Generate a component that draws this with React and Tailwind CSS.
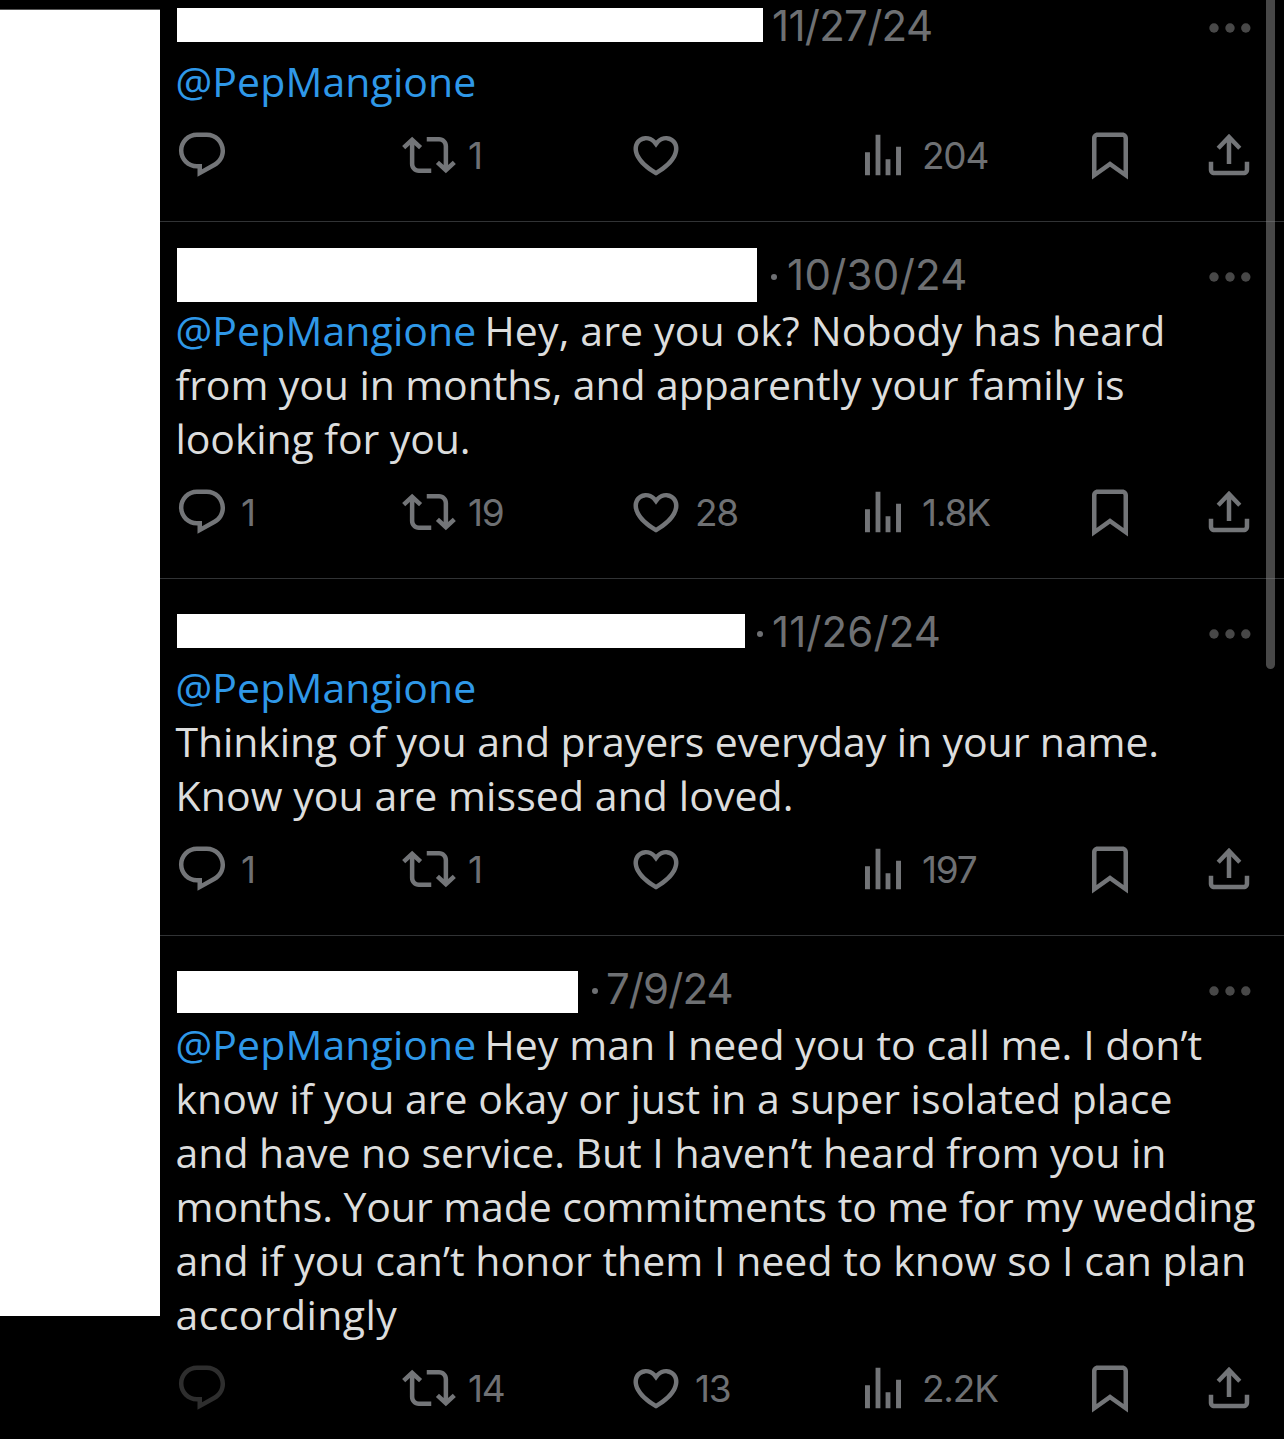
const PATHS = {
  reply:
    "M1.751 10c0-4.42 3.584-8 8.005-8h4.366c4.49 0 8.129 3.64 8.129 8.13 0 2.96-1.607 5.68-4.196 7.11l-8.054 4.46v-3.69h-.067c-4.49.1-8.183-3.51-8.183-8.01zm8.005-6c-3.317 0-6.005 2.69-6.005 6 0 3.37 2.77 6.08 6.138 6.01l.351-.01h1.761v2.3l5.087-2.81c1.951-1.08 3.163-3.13 3.163-5.36 0-3.39-2.744-6.13-6.129-6.13H9.756z",
  repost:
    "M4.5 3.88l4.432 4.14-1.364 1.46L5.5 7.55V16c0 1.1.896 2 2 2H13v2H7.5c-2.209 0-4-1.79-4-4V7.55L1.432 9.48.068 8.02 4.5 3.88zM16.5 6H11V4h5.5c2.209 0 4 1.79 4 4v8.45l2.068-1.93 1.364 1.46-4.432 4.14-4.432-4.14 1.364-1.46 2.068 1.93V8c0-1.1-.896-2-2-2z",
  heart:
    "M16.697 5.5c-1.222-.06-2.679.51-3.89 2.16l-.805 1.09-.806-1.09C9.984 6.01 8.526 5.44 7.304 5.5c-1.243.07-2.349.78-2.91 1.91-.552 1.12-.633 2.78.479 4.82 1.074 1.97 3.257 4.27 7.129 6.61 3.87-2.34 6.052-4.64 7.126-6.61 1.111-2.04 1.03-3.7.477-4.82-.561-1.13-1.666-1.84-2.908-1.91zm4.187 7.69c-1.351 2.48-4.001 5.12-8.379 7.67l-.503.3-.504-.3c-4.379-2.55-7.029-5.19-8.382-7.67-1.36-2.5-1.41-4.86-.514-6.67.887-1.79 2.647-2.91 4.601-3.01 1.651-.09 3.368.56 4.798 2.01 1.429-1.45 3.146-2.1 4.796-2.01 1.954.1 3.714 1.22 4.601 3.01.896 1.81.846 4.17-.514 6.67z",
  views: "M4 10.8h2.2V21H4zM8.7 3h2.15v18H8.7zM13.15 13.9h2.15V21h-2.15zM17.8 8.3H20V21h-2.2z",
  bookmark:
    "M4 4.5C4 3.12 5.119 2 6.5 2h11C18.881 2 20 3.12 20 4.5v18.44l-8-5.71-8 5.71V4.5zM6.5 4c-.276 0-.5.22-.5.5v14.56l6-4.29 6 4.29V4.5c0-.28-.224-.5-.5-.5h-11z",
  share:
    "M12 2.59l5.5 5.7-1.41 1.42L13 6.41V16h-2V6.41l-3.1 3.3-1.41-1.42L12 2.59zM21 15l-.02 3.51c0 1.38-1.12 2.49-2.5 2.49H5.5C4.11 21 3 19.88 3 18.5V15h2v3.5c0 .28.22.5.5.5h12.98c.28 0 .5-.22.5-.5L19 15h2z",
};

function Action({ icon, count, dim }) {
  return (
    <div className={dim ? "flex items-center text-[#2e2e2e]" : "flex items-center text-[#737578]"}>
      <svg viewBox="0 0 24 24" className="size-[54px] shrink-0" fill="currentColor">
        <path d={PATHS[icon]} />
      </svg>
      {count && (
        <span className="ml-3 font-['Inter',sans-serif] text-[37px] leading-none font-normal tracking-[-1.2px] whitespace-nowrap text-[#6e7073]">
          {count}
        </span>
      )}
    </div>
  );
}

function More() {
  return (
    <svg viewBox="0 0 42 12" className="mt-1 mr-[33px] ml-auto h-3 w-[42px]" fill="#484848">
      <circle cx="5" cy="6" r="4.7" />
      <circle cx="21" cy="6" r="4.7" />
      <circle cx="36.8" cy="6" r="4.7" />
    </svg>
  );
}

function Post({ box, dotGap, date, dateClass, first, last, lines, stats, dimReply }) {
  return (
    <article
      className={
        (first ? "-mt-px " : "pt-[26px] ") + (last ? "" : "border-b border-[#313335] pb-5")
      }
    >
      <header className="flex h-[55px] pl-[17px]">
        <div className={"shrink-0 bg-white " + box} />
        <div className="flex h-[54px] flex-1 items-center font-['Inter',sans-serif] text-[42px] leading-none font-normal text-[#6e7073]">
          {dotGap && (
            <span className={"flex w-4 justify-center " + dotGap}>
              <span className="mt-1 size-[6px] rounded-full bg-current" />
            </span>
          )}
          <time className={"whitespace-nowrap " + dateClass}>{date}</time>
          <More />
        </div>
      </header>
      <div className="mb-px pl-[15.5px] font-['Open_Sans',sans-serif] text-[41px] leading-[54px] whitespace-nowrap text-[#dcdddd]">
        {lines.map((line, i) => (
          <div key={i} className="flex h-[54px]">
            {i === 0 && <span className="tracking-[0.1px] text-[#2f98e8]">@PepMangione</span>}
            <span className={line[1]}>{line[0]}</span>
          </div>
        ))}
      </div>
      <footer className="grid h-[92px] grid-cols-[227px_227px_227px_227px_119px_54px] items-center pl-[15px]">
        <Action icon="reply" count={stats[0]} dim={dimReply} />
        <Action icon="repost" count={stats[1]} />
        <Action icon="heart" count={stats[2]} />
        <Action icon="views" count={stats[3]} />
        <Action icon="bookmark" />
        <Action icon="share" />
      </footer>
    </article>
  );
}

const posts = [
  {
    first: true,
    box: "mt-[9px] h-[34px] w-[586px]",
    date: "11/27/24",
    dateClass: "ml-[9px] tracking-[-0.7px]",
    lines: [["", ""]],
    stats: ["", "1", "", "204"],
  },
  {
    box: "h-[54px] w-[580px]",
    dotGap: "ml-[9px]",
    date: "10/30/24",
    dateClass: "ml-[5px] tracking-[0.3px]",
    lines: [
      ["Hey, are you ok? Nobody has heard", "ml-[8px] tracking-[0.14px]"],
      ["from you in months, and apparently your family is", "tracking-[-0.1px]"],
      ["looking for you.", "tracking-[-0.1px]"],
    ],
    stats: ["1", "19", "28", "1.8K"],
  },
  {
    box: "mt-[9px] h-[34px] w-[568px]",
    dotGap: "ml-[7px]",
    date: "11/26/24",
    dateClass: "ml-1 tracking-[0.1px]",
    lines: [
      ["", ""],
      ["Thinking of you and prayers everyday in your name.", "tracking-[-0.1px]"],
      ["Know you are missed and loved.", "tracking-[0.08px]"],
    ],
    stats: ["1", "1", "", "197"],
  },
  {
    last: true,
    dimReply: true,
    box: "mt-[9px] h-[42px] w-[401px]",
    dotGap: "ml-[9px]",
    date: "7/9/24",
    dateClass: "ml-[3px] tracking-[-0.9px]",
    lines: [
      ["Hey man I need you to call me. I don’t", "ml-[8px] tracking-[0.05px]"],
      ["know if you are okay or just in a super isolated place", ""],
      ["and have no service. But I haven’t heard from you in", "tracking-[-0.02px]"],
      ["months. Your made commitments to me for my wedding", "tracking-[-0.07px]"],
      ["and if you can’t honor them I need to know so I can plan", "tracking-[0.03px]"],
      ["accordingly", "tracking-[0.4px]"],
    ],
    stats: ["", "14", "13", "2.2K"],
  },
];

export default function App() {
  return (
    <div className="relative flex h-[1439px] w-[1284px] overflow-hidden bg-black">
      <aside className="mt-[9px] h-[1307px] w-40 shrink-0 border-t border-[#555] bg-white" />
      <main className="min-w-0 flex-1">
        {posts.map((p, i) => (
          <Post key={i} {...p} />
        ))}
      </main>
      <div className="absolute top-0 right-[9px] h-[669px] w-[9px] rounded-b-full bg-[#8f8f8f]/50" />
    </div>
  );
}
